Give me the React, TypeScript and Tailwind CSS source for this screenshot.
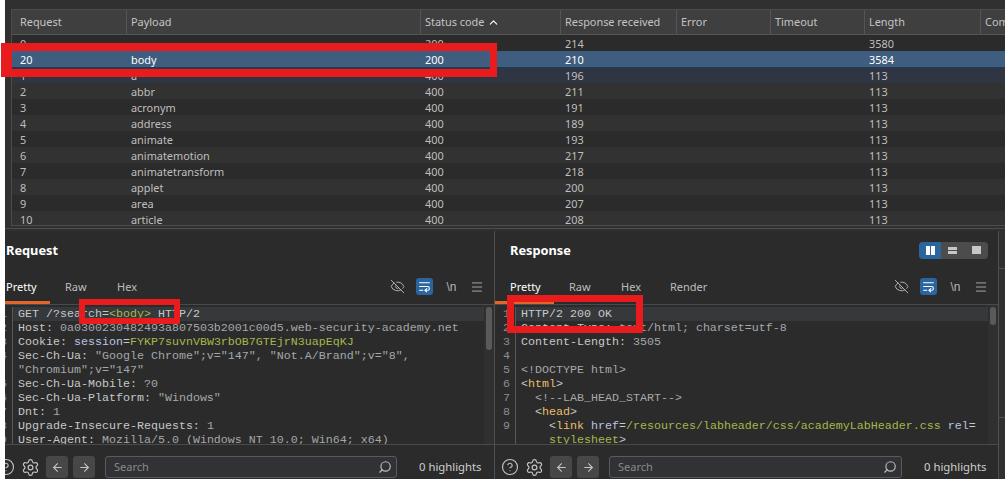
import { EyeOff, Search, ArrowLeft, ArrowRight, Settings, CircleHelp, ChevronUp, Menu, WrapText } from "lucide-react";
import type { ReactNode } from "react";

const columns = [
  { label: "Request", w: "w-[115px]" },
  { label: "Payload", w: "w-[294px]" },
  { label: "Status code", w: "w-[140px]" },
  { label: "Response received", w: "w-[116px]" },
  { label: "Error", w: "w-[94px]" },
  { label: "Timeout", w: "w-[94px]" },
  { label: "Length", w: "w-[116px]" },
  { label: "Comment", w: "w-[40px]" },
];

const rows = [
  ["0", "", "200", "214", "3580"],
  ["20", "body", "200", "210", "3584"],
  ["1", "a", "400", "196", "113"],
  ["2", "abbr", "400", "211", "113"],
  ["3", "acronym", "400", "191", "113"],
  ["4", "address", "400", "189", "113"],
  ["5", "animate", "400", "193", "113"],
  ["6", "animatemotion", "400", "217", "113"],
  ["7", "animatetransform", "400", "218", "113"],
  ["8", "applet", "400", "200", "113"],
  ["9", "area", "400", "207", "113"],
  ["10", "article", "400", "208", "113"],
];

const Row = ({ cells, index }: { cells: string[]; index: number }) => {
  const selected = index === 1;
  const tint = index === 2;
  const odd = index % 2 === 1;
  return (
    <div
      className={`flex h-4 shrink-0 items-center pt-[2px] leading-[14px] ${
        selected
          ? "border-b border-[#2f6496] bg-[#3f5d7e] text-white"
          : tint
            ? "bg-[#2f3542] text-[#bfbfbf]"
            : odd
              ? "bg-[#323232] text-[#bfbfbf]"
              : "bg-[#2b2b2b] text-[#bfbfbf]"
      }`}
    >
      <span className="w-[115px] shrink-0 pl-[8px]">{cells[0]}</span>
      <span className="w-[294px] shrink-0 pl-[4px]">{cells[1]}</span>
      <span className="w-[140px] shrink-0 pl-[4px]">{cells[2]}</span>
      <span className="w-[304px] shrink-0 pl-[4px]">{cells[3]}</span>
      <span className="pl-[4px]">{cells[4]}</span>
    </div>
  );
};

const Line = ({ n, active, children }: { n?: number; active?: boolean; children: ReactNode }) => (
  <div className="flex h-[14px] leading-[14px]">
    <span className="mr-[2px] w-[12px] shrink-0 pr-[3px] text-right text-[#8a8f93]">{n}</span>
    <span className={`flex-1 whitespace-pre border-l border-[#55595c] pl-[5px] ${active ? "bg-[#36393c]" : ""}`}>{children}</span>
  </div>
);

const TextIcons = ({ className }: { className: string }) => (
  <div className={`flex items-center pb-[8px] text-[#b5b5b5] ${className}`}>
    <EyeOff size={15} strokeWidth={1.5} className="mr-[11px]" />
    <span className="mr-[10px] flex h-[17px] w-[17px] items-center justify-center rounded-[3px] bg-[#2a659f] text-white">
      <WrapText size={13} strokeWidth={2} />
    </span>
    <span className="mr-[10px] w-[17px] text-center font-['Liberation_Sans',sans-serif] text-[12px]">\n</span>
    <Menu size={14} strokeWidth={1.5} />
  </div>
);

const Footer = ({ first, searchWidth }: { first: string; searchWidth: string }) => (
  <div className="flex h-[35px] shrink-0 items-center border-t border-[#4a4a4a] pt-[10px] text-[#c4c4c4]">
    <CircleHelp size={18} strokeWidth={1.5} className={`shrink-0 ${first}`} />
    <Settings size={19} strokeWidth={1.5} className="ml-[6px] shrink-0" />
    <span className="ml-[6px] flex h-[22px] w-[22px] shrink-0 items-center justify-center rounded-[3px] bg-[#474747]">
      <ArrowLeft size={13} />
    </span>
    <span className="ml-[5px] flex h-[22px] w-[22px] shrink-0 items-center justify-center rounded-[3px] bg-[#474747]">
      <ArrowRight size={13} />
    </span>
    <div className={`ml-[10px] flex h-[22px] shrink-0 items-center rounded-[3px] border border-[#5a5a5a] bg-[#313235] pl-2 pr-[4px] text-[#8a8a8a] ${searchWidth}`}>
      <span className="flex-1 text-[11px]">Search</span>
      <Search size={14} className="-scale-x-100 text-[#bdbdbd]" />
    </div>
    <span className="ml-[22px] shrink-0 whitespace-nowrap text-[11.3px] text-[#cfcfcf]">0 highlights</span>
  </div>
);

const green = "text-[#a5b84a]";
const dim = "text-[#a4a8aa]";
const blue = "text-[#b9c4e6]";
const tag = "text-[#e8bf6a]";
const code = "font-['Liberation_Mono',monospace] text-[11.67px] text-[#c6c8c9]";

export default function App() {
  return (
    <div className="relative flex h-[479px] w-[1005px] overflow-hidden bg-white font-['Noto_Sans','Open_Sans',sans-serif] text-[10.9px]">
      <div className="ml-[5px] flex min-w-0 flex-1 flex-col bg-[#303030]">
        <div className="h-[9px] shrink-0" />
        <div className="ml-[6px] flex h-[217px] shrink-0 flex-col overflow-hidden border-b border-l border-t border-[#4c4c4c]">
          <div className="flex h-[25px] shrink-0 items-center border-b border-[#555] bg-[#3f3f40] text-[#c4c4c4]">
            {columns.map((c, i) => (
              <span
                key={c.label}
                className={`${c.w} flex h-full shrink-0 items-center overflow-hidden whitespace-nowrap border-r border-[#555] ${i === 0 ? "pl-2" : "pl-1"}`}
              >
                {c.label}
                {i === 2 && <ChevronUp size={13} className="ml-[3px] text-white" />}
              </span>
            ))}
          </div>
          {rows.map((r, i) => (
            <Row key={r[0]} cells={r} index={i} />
          ))}
        </div>
        <div className="h-[5px] shrink-0 pt-[2px]">
          <div className="h-px bg-[#4c4c4c]" />
        </div>

        <div className="flex min-h-0 flex-1">
          <section className="flex w-[490px] shrink-0 flex-col overflow-hidden border-r border-[#505050] bg-[#2b2b2b]">
            <h2 className="flex h-[46px] shrink-0 items-center pb-[6px] pl-px text-[12.8px] font-bold text-white">Request</h2>
            <div className="flex h-[28px] shrink-0 items-center justify-between border-b border-[#4a4a4a]">
              <div className="flex h-full text-[11px] text-[#bdbdbd]">
                <span className="flex w-[45px] items-center border-b-[3px] border-[#e2662b] pb-[4px] pl-px text-white">Pretty</span>
                <span className="ml-[15px] flex w-[52px] items-center pb-[7px]">Raw</span>
                <span className="flex items-center pb-[7px]">Hex</span>
              </div>
              <TextIcons className="mr-[10px]" />
            </div>
            <div className={`flex min-h-0 flex-1 overflow-hidden pt-[2px] ${code}`}>
              <div className="-ml-[7px] min-w-0 flex-1">
                <Line n={1} active>GET /?search=<span className={green}>&lt;body&gt;</span> HTTP/2</Line>
                <Line n={2}>Host: <span className={dim}>0a0300230482493a807503b2001c00d5.web-security-academy.net</span></Line>
                <Line n={3}>Cookie: <span className={blue}>session</span>=<span className={green}>FYKP7suvnVBW3rbOB7GTEjrN3uapEqKJ</span></Line>
                <Line n={4}>Sec-Ch-Ua: <span className={dim}>"Google Chrome";v="147", "Not.A/Brand";v="8",</span></Line>
                <Line><span className={dim}>"Chromium";v="147"</span></Line>
                <Line n={5}>Sec-Ch-Ua-Mobile: <span className={dim}>?0</span></Line>
                <Line n={6}>Sec-Ch-Ua-Platform: <span className={dim}>"Windows"</span></Line>
                <Line n={7}>Dnt: <span className={dim}>1</span></Line>
                <Line n={8}>Upgrade-Insecure-Requests: <span className={dim}>1</span></Line>
                <Line n={9}>User-Agent: <span className={dim}>Mozilla/5.0 (Windows NT 10.0; Win64; x64)</span></Line>
              </div>
              <div className="relative -mt-[2px] w-[10px] shrink-0 bg-[#303030]">
                <span className="absolute left-[2px] top-[2px] h-[43px] w-[6px] rounded bg-[#5a5a5a]" />
              </div>
            </div>
            <Footer first="-ml-[8px]" searchWidth="w-[292px]" />
          </section>

          <section className="flex w-[504px] shrink-0 flex-col overflow-hidden border-r border-[#505050] bg-[#2b2b2b]">
            <div className="flex h-[46px] shrink-0 items-center justify-between pb-[8px] pl-[15px] pr-[10px]">
              <h2 className="pt-[2px] text-[12.8px] font-bold text-white">Response</h2>
              <div className="flex h-[17px] overflow-hidden rounded-[4px] bg-[#4c4c4c]">
                <span className="flex w-[22px] items-center justify-center gap-[1px] bg-[#2a659f]">
                  <i className="h-[9px] w-[4px] bg-white" />
                  <i className="h-[9px] w-[4px] bg-white" />
                </span>
                <span className="flex w-[23px] flex-col items-center justify-center gap-[1px]">
                  <i className="h-[3px] w-[9px] bg-[#c8c8c8]" />
                  <i className="h-[3px] w-[9px] bg-[#c8c8c8]" />
                </span>
                <span className="flex w-[24px] items-center justify-center">
                  <i className="h-[8px] w-[9px] bg-[#c8c8c8]" />
                </span>
              </div>
            </div>
            <div className="flex h-[28px] shrink-0 items-center justify-between border-b border-[#4a4a4a]">
              <div className="flex h-full text-[11px] text-[#bdbdbd]">
                <span className="flex w-[59px] items-center border-b-[3px] border-[#e2662b] pb-[4px] pl-[15px] text-white">Pretty</span>
                <span className="ml-[15px] flex w-[52px] items-center pb-[7px]">Raw</span>
                <span className="flex w-[49px] items-center pb-[7px]">Hex</span>
                <span className="flex items-center pb-[7px]">Render</span>
              </div>
              <TextIcons className="mr-[10px]" />
            </div>
            <div className={`flex min-h-0 flex-1 overflow-hidden pt-[2px] ${code}`}>
              <div className="min-w-0 flex-1 pl-[6px]">
                <Line n={1} active>HTTP/2 200 OK</Line>
                <Line n={2}>Content-Type: <span className={dim}>text/html; charset=utf-8</span></Line>
                <Line n={3}>Content-Length: <span className={dim}>3505</span></Line>
                <Line n={4}> </Line>
                <Line n={5}><span className={dim}>&lt;!DOCTYPE html&gt;</span></Line>
                <Line n={6}>&lt;<span className={tag}>html</span>&gt;</Line>
                <Line n={7}><span className={dim}>  &lt;!--LAB_HEAD_START--&gt;</span></Line>
                <Line n={8}>  &lt;<span className={tag}>head</span>&gt;</Line>
                <Line n={9}>    &lt;<span className={tag}>link</span> <span className={blue}>href</span>=<span className={green}>/resources/labheader/css/academyLabHeader.css</span> <span className={blue}>rel</span>=</Line>
                <Line>    <span className={green}>stylesheet</span>&gt;</Line>
              </div>
              <div className="relative -mt-[2px] w-[10px] shrink-0 bg-[#303030]">
                <span className="absolute left-[2px] top-[2px] h-[18px] w-[6px] rounded bg-[#5a5a5a]" />
              </div>
            </div>
            <Footer first="ml-[6px]" searchWidth="w-[293px]" />
          </section>

          <div className="flex-1">
            <div className="mt-[37px] h-px bg-[#505050]" />
            <div className="mt-[148px] h-px bg-[#505050]" />
          </div>
        </div>
      </div>

      <div className="absolute left-[1px] top-[43px] h-[34px] w-[496px] border-y-[8px] border-l-[11px] border-r-[7px] border-[#e81c1c]" />
      <div className="absolute left-[79px] top-[299px] h-[25px] w-[101px] border-[6px] border-[#e81c1c]" />
      <div className="absolute left-[507px] top-[295px] h-[38px] w-[136px] border-[7px] border-[#e81c1c]" />
    </div>
  );
}
